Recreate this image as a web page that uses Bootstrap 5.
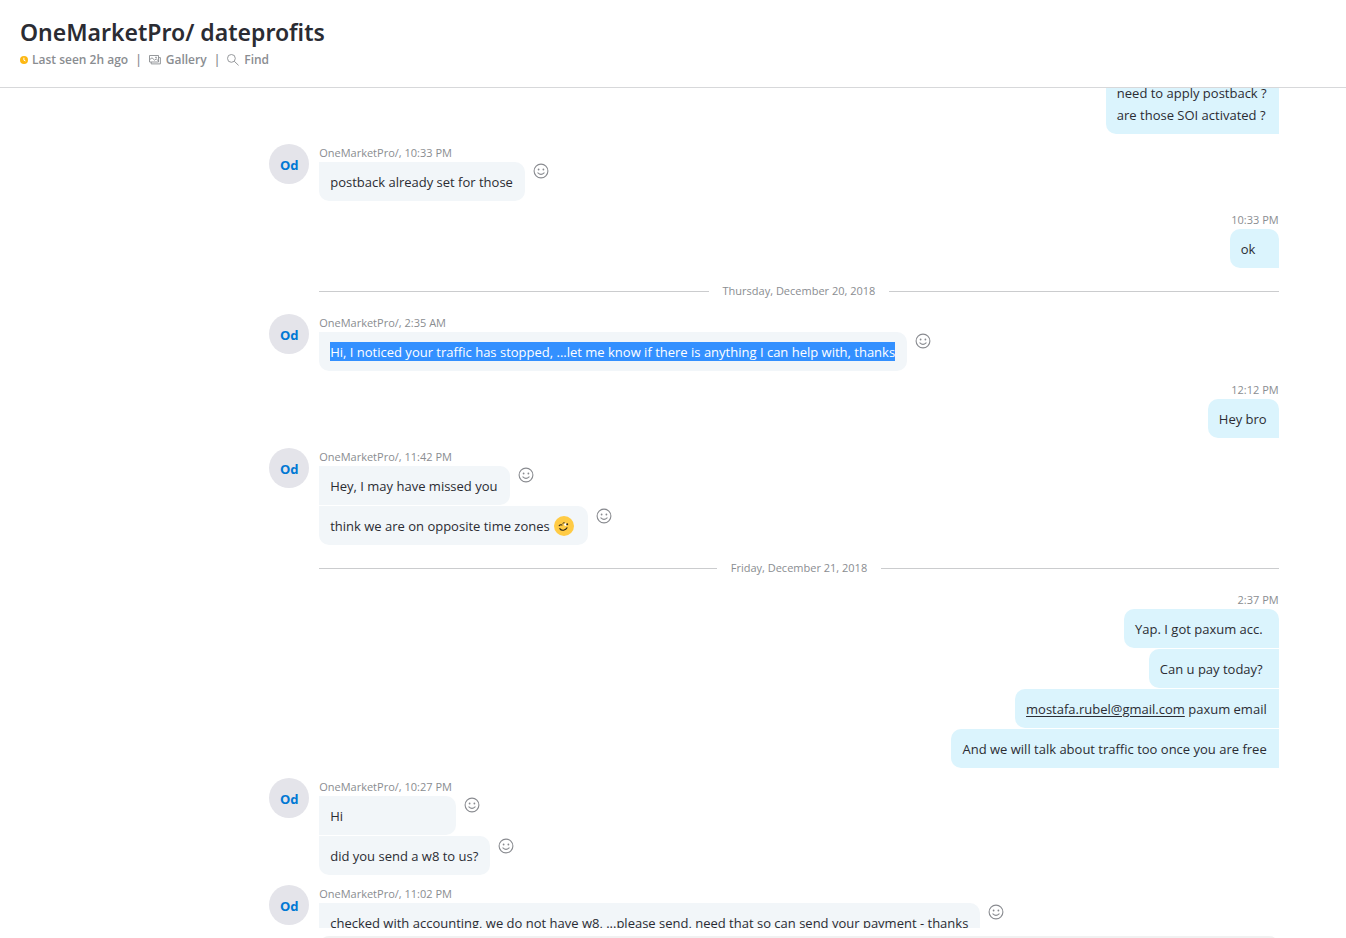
<!DOCTYPE html>
<html lang="en">
<head>
<meta charset="utf-8">
<meta name="viewport" content="width=device-width, initial-scale=1">
<title>OneMarketPro/ dateprofits</title>
<link href="https://cdn.jsdelivr.net/npm/bootstrap@5.3.0/dist/css/bootstrap.min.css" rel="stylesheet">
<style>
  body { font-family: "Open Sans", "Noto Sans", sans-serif; font-size: 13px; line-height: 22px; color: #2b2c33; background: #fff; }
  .chat-head { padding: 15px 20px 17px; height: 88px; border-bottom: 1px solid #d7d8da; }
  .chat-title { font-family: "Noto Sans", sans-serif; font-size: 23px; font-weight: 600; line-height: 34px; color: #2b2c33; }
  .chat-info { font-size: 12px; font-weight: 600; line-height: 22px; color: #8a8d91; gap: 7px; }
  .info-item { gap: 5px; color: inherit; font-weight: inherit; }
  .info-status { gap: 4px; }
  .plain { background: none; border: 0; padding: 0; }
  .chat-log { padding-left: 20%; padding-right: 5%; }
  .log-list { gap: 10px; margin-top: -6px; }
  .avatar { width: 40px; height: 40px; padding-top: 2px; background: #e4e4ea; color: #0078d4; font-weight: 700; margin-right: 10px; }
  .stamp { font-size: 11px; line-height: 18px; color: #8a8d91; }
  .mine { margin-left: 50px; }
  .bubbles { gap: 1px; }
  .bubble { padding: 9px 12px 8px 11px; }
  .theirs .bubble { background: #f2f6f9; min-width: 137px; border-radius: 0 10px 10px 0; }
  .theirs .line:last-child .bubble { border-bottom-left-radius: 10px; }
  .mine .bubble { background: #dbf4fd; min-width: 49px; border-radius: 10px 0 0 10px; }
  .mine .bubble:first-child { border-top-right-radius: 10px; }
  .mine .bubble.carried { padding-top: 0; border-radius: 0 0 0 10px; }
  .mine .bubble.roomy { padding-right: 16px; }
  .bubble a { color: inherit; text-underline-offset: 2px; }
  .picked { background: #3390ff; color: #fff; padding-top: 1px; }
  .react { margin: 1px 0 0 8px; width: 16px; height: 16px; }
  .line + .line .react { margin-top: 2px; }
  .react svg, .wink { display: block; }
  .day { margin-left: 50px; font-size: 11px; line-height: 26px; color: #8a8d91; gap: 14px; }
  .rule { height: 1px; background: #cbccce; }
  .chat-foot { height: 10px; padding: 8px 5% 0 20%; }
  .composer { height: 40px; margin-left: 50px; border-radius: 10px; background: #f1f1f1; }
</style>
</head>
<body>
<svg class="d-none" aria-hidden="true">
  <symbol id="smile" viewBox="0 0 16 16">
    <circle cx="8" cy="8" r="6.9" fill="none" stroke="#898b90" stroke-width="1.1"/>
    <circle cx="5.6" cy="6.5" r=".9" fill="#898b90"/><circle cx="10.4" cy="6.5" r=".9" fill="#898b90"/>
    <path d="M4.9 9.8Q8 12.9 11.1 9.8" fill="none" stroke="#898b90" stroke-width="1.1" stroke-linecap="round"/>
  </symbol>
</svg>
<div class="d-flex flex-column vh-100 overflow-hidden">
  <header class="chat-head flex-shrink-0">
    <h1 class="chat-title mb-0">OneMarketPro/ dateprofits</h1>
    <div class="chat-info d-flex align-items-center">
      <span class="info-item info-status d-flex align-items-center">
        <svg width="8" height="8" viewBox="0 0 8 8" aria-hidden="true"><circle cx="4" cy="4" r="4" fill="#fdb813"/><path d="M3.9 1.7V4.2L5.5 5" fill="none" stroke="#fff" stroke-width="1"/></svg>
        Last seen 2h ago
      </span>
      <span>|</span>
      <button type="button" class="plain info-item d-flex align-items-center">
        <svg width="12" height="12" viewBox="0 0 12 12" fill="none" stroke="#8a8d91" stroke-width=".9" aria-hidden="true"><path d="M.5 1.5H9.5V8H.5ZM.7 5.6 3 3.8 5.6 6.2 7.2 4.9 9.3 6.8M2.2 8V9.9H11.4V3.6H9.5"/><circle cx="7" cy="3.4" r=".5"/></svg>
        Gallery
      </button>
      <span>|</span>
      <button type="button" class="plain info-item d-flex align-items-center">
        <svg width="12" height="12" viewBox="0 0 12 12" fill="none" stroke="#8a8d91" stroke-width=".9" aria-hidden="true"><circle cx="4.4" cy="4.4" r="3.9"/><path d="M7.3 7.3 11.6 11.4"/></svg>
        Find
      </button>
    </div>
  </header>

  <main class="chat-log flex-grow-1 overflow-hidden">
    <div class="log-list d-flex flex-column">
      <section class="mine d-flex flex-column align-items-end">
        <div class="bubble carried">need to apply postback ?<br>are those SOI activated ?</div>
      </section>

      <section class="theirs d-flex">
        <div class="avatar rounded-circle d-flex align-items-center justify-content-center flex-shrink-0">Od</div>
        <div>
          <div class="stamp">OneMarketPro/, 10:33 PM</div>
          <div class="bubbles d-flex flex-column">
            <div class="line d-flex align-items-start"><div class="bubble">postback already set for those</div><button type="button" class="plain react" aria-label="React"><svg width="16" height="16"><use href="#smile"/></svg></button></div>
          </div>
        </div>
      </section>

      <section class="mine">
        <div class="stamp text-end">10:33 PM</div>
        <div class="bubbles d-flex flex-column align-items-end"><div class="bubble">ok</div></div>
      </section>

      <div class="day d-flex align-items-center"><span class="rule flex-fill"></span>Thursday, December 20, 2018<span class="rule flex-fill"></span></div>

      <section class="theirs d-flex">
        <div class="avatar rounded-circle d-flex align-items-center justify-content-center flex-shrink-0">Od</div>
        <div>
          <div class="stamp">OneMarketPro/, 2:35 AM</div>
          <div class="bubbles d-flex flex-column">
            <div class="line d-flex align-items-start"><div class="bubble"><span class="picked">Hi, I noticed your traffic has stopped, ...let me know if there is anything I can help with, thanks</span></div><button type="button" class="plain react" aria-label="React"><svg width="16" height="16"><use href="#smile"/></svg></button></div>
          </div>
        </div>
      </section>

      <section class="mine">
        <div class="stamp text-end">12:12 PM</div>
        <div class="bubbles d-flex flex-column align-items-end"><div class="bubble">Hey bro</div></div>
      </section>

      <section class="theirs d-flex">
        <div class="avatar rounded-circle d-flex align-items-center justify-content-center flex-shrink-0">Od</div>
        <div>
          <div class="stamp">OneMarketPro/, 11:42 PM</div>
          <div class="bubbles d-flex flex-column">
            <div class="line d-flex align-items-start"><div class="bubble">Hey, I may have missed you</div><button type="button" class="plain react" aria-label="React"><svg width="16" height="16"><use href="#smile"/></svg></button></div>
            <div class="line d-flex align-items-start"><div class="bubble d-flex align-items-center gap-1">think we are on opposite time zones
              <svg class="wink" width="22" height="20" viewBox="0 0 22 20" role="img" aria-label="wink"><circle cx="10" cy="10" r="10" fill="#ffcb45"/><path d="M5.2 9.6Q6.4 8.4 8 9M5.8 12.6Q7 14.6 9.6 14.2 12.2 13.8 13 11.8" fill="none" stroke="#2d2316" stroke-width="1.1" stroke-linecap="round"/><path d="M8.6 7.4Q9.6 6.6 10.8 7" fill="none" stroke="#2d2316"/><circle cx="11.4" cy="8.6" r="1.4" fill="#fff"/><circle cx="13.2" cy="8.2" r="1" fill="#2d2316"/></svg>
            </div><button type="button" class="plain react" aria-label="React"><svg width="16" height="16"><use href="#smile"/></svg></button></div>
          </div>
        </div>
      </section>

      <div class="day d-flex align-items-center"><span class="rule flex-fill"></span>Friday, December 21, 2018<span class="rule flex-fill"></span></div>

      <section class="mine">
        <div class="stamp text-end">2:37 PM</div>
        <div class="bubbles d-flex flex-column align-items-end">
          <div class="bubble roomy">Yap. I got paxum acc.</div>
          <div class="bubble roomy">Can u pay today?</div>
          <div class="bubble"><a href="mailto:mostafa.rubel@gmail.com">mostafa.rubel@gmail.com</a> paxum email</div>
          <div class="bubble">And we will talk about traffic too once you are free</div>
        </div>
      </section>

      <section class="theirs d-flex">
        <div class="avatar rounded-circle d-flex align-items-center justify-content-center flex-shrink-0">Od</div>
        <div>
          <div class="stamp">OneMarketPro/, 10:27 PM</div>
          <div class="bubbles d-flex flex-column">
            <div class="line d-flex align-items-start"><div class="bubble">Hi</div><button type="button" class="plain react" aria-label="React"><svg width="16" height="16"><use href="#smile"/></svg></button></div>
            <div class="line d-flex align-items-start"><div class="bubble">did you send a w8 to us?</div><button type="button" class="plain react" aria-label="React"><svg width="16" height="16"><use href="#smile"/></svg></button></div>
          </div>
        </div>
      </section>

      <section class="theirs d-flex">
        <div class="avatar rounded-circle d-flex align-items-center justify-content-center flex-shrink-0">Od</div>
        <div>
          <div class="stamp">OneMarketPro/, 11:02 PM</div>
          <div class="bubbles d-flex flex-column">
            <div class="line d-flex align-items-start"><div class="bubble">checked with accounting, we do not have w8, ...please send, need that so can send your payment - thanks</div><button type="button" class="plain react" aria-label="React"><svg width="16" height="16"><use href="#smile"/></svg></button></div>
          </div>
        </div>
      </section>
    </div>
  </main>

  <footer class="chat-foot flex-shrink-0 overflow-hidden"><div class="composer"></div></footer>
</div>
<script src="https://cdn.jsdelivr.net/npm/bootstrap@5.3.0/dist/js/bootstrap.bundle.min.js"></script>
</body>
</html>
